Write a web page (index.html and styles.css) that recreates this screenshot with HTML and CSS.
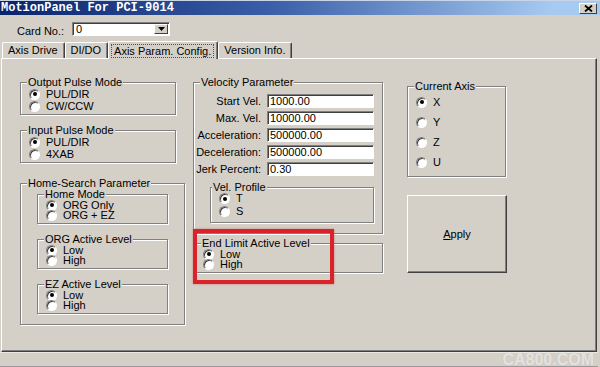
FILE: index.html
```html
<!DOCTYPE html>
<html lang="en">
<head>
    <meta charset="UTF-8">
    <title>MotionPanel For PCI-9014</title>
    <link rel="stylesheet" href="styles.css">
</head>
<body>
    <div id="window">
        <div class="titlebar">
            <span class="title">MotionPanel For PCI-9014</span>
            <span class="close">
                <svg width="9" height="7" viewBox="0 0 9 7"><path d="M1 0.5 L8 6.5 M8 0.5 L1 6.5" stroke="#000" stroke-width="1.8"/></svg>
            </span>
        </div>
        <div class="cardrow">
            <span class="cardlabel">Card No.:</span>
            <div class="combo">
                <span class="combo-value">0</span>
                <span class="drop">
                    <svg width="7" height="4" viewBox="0 0 7 4"><path d="M0 0 H7 L3.5 4 Z" fill="#000"/></svg>
                </span>
            </div>
        </div>
        <div class="tabs">
            <span class="tab">Axis Drive</span>
            <span class="tab">DI/DO</span>
            <span class="tab active"><span class="focus">Axis Param. Config.</span></span>
            <span class="tab">Version Info.</span>
        </div>
        <div class="panel">
            <div class="col col-left">
                <fieldset class="group g-output">
                    <legend>Output Pulse Mode</legend>
                    <div class="opt"><i class="radio on"></i>PUL/DIR</div>
                    <div class="opt"><i class="radio"></i>CW/CCW</div>
                </fieldset>
                <fieldset class="group g-input">
                    <legend>Input Pulse Mode</legend>
                    <div class="opt"><i class="radio on"></i>PUL/DIR</div>
                    <div class="opt"><i class="radio"></i>4XAB</div>
                </fieldset>
                <fieldset class="group g-home">
                    <legend>Home-Search Parameter</legend>
                    <fieldset class="group g-sub first">
                        <legend>Home Mode</legend>
                        <div class="opt small"><i class="radio on"></i>ORG Only</div>
                        <div class="opt small"><i class="radio"></i>ORG + EZ</div>
                    </fieldset>
                    <fieldset class="group g-sub">
                        <legend>ORG Active Level</legend>
                        <div class="opt small"><i class="radio on"></i>Low</div>
                        <div class="opt small"><i class="radio"></i>High</div>
                    </fieldset>
                    <fieldset class="group g-sub">
                        <legend>EZ Active Level</legend>
                        <div class="opt small"><i class="radio on"></i>Low</div>
                        <div class="opt small"><i class="radio"></i>High</div>
                    </fieldset>
                </fieldset>
            </div>
            <div class="col col-mid">
                <fieldset class="group g-vel">
                    <legend>Velocity Parameter</legend>
                    <div class="fields">
                        <span class="flabel">Start Vel.</span><span class="edit">1000.00</span>
                        <span class="flabel">Max. Vel.</span><span class="edit">10000.00</span>
                        <span class="flabel">Acceleration:</span><span class="edit">500000.00</span>
                        <span class="flabel">Deceleration:</span><span class="edit">500000.00</span>
                        <span class="flabel">Jerk Percent:</span><span class="edit">0.30</span>
                    </div>
                    <fieldset class="group g-profile">
                        <legend>Vel. Profile</legend>
                        <div class="opt mid"><i class="radio on"></i>T</div>
                        <div class="opt mid"><i class="radio"></i>S</div>
                    </fieldset>
                </fieldset>
                <fieldset class="group g-limit">
                    <legend>End Limit Active Level</legend>
                    <div class="opt small"><i class="radio on"></i>Low</div>
                    <div class="opt small"><i class="radio"></i>High</div>
                </fieldset>
            </div>
            <div class="col col-right">
                <fieldset class="group g-axis">
                    <legend>Current Axis</legend>
                    <div class="opt tall"><i class="radio on"></i>X</div>
                    <div class="opt tall"><i class="radio"></i>Y</div>
                    <div class="opt tall"><i class="radio"></i>Z</div>
                    <div class="opt tall"><i class="radio"></i>U</div>
                </fieldset>
                <div class="button"><span><u>A</u>pply</span></div>
            </div>
            <div class="mark"></div>
        </div>
        <div class="status"><span class="watermark">CA800.COM</span></div>
    </div>
</body>
</html>
```

FILE: styles.css
```css
*{
    margin: 0;
    padding: 0;
    box-sizing: border-box;
}
body{
    width: 600px;
    height: 367px;
    overflow: hidden;
    background: #d4d0c8;
    font-family: "Liberation Sans", Arial, sans-serif;
    font-size: 11px;
    color: #000;
}
#window{
    width: 600px;
    height: 367px;
    display: flex;
    flex-direction: column;
}

/* title bar */
.titlebar{
    height: 15px;
    display: flex;
    align-items: center;
    justify-content: space-between;
    background: linear-gradient(to right, #0a246a, #3a5ea8 45%, #a6caf0 92%);
    border-top: 1px solid #c8d4e8;
}
.title{
    font-family: "Liberation Mono", monospace;
    font-weight: bold;
    font-size: 12px;
    line-height: 14px;
    color: #fff;
    padding-left: 1px;
}
.close{
    width: 18px;
    height: 11px;
    margin-right: 3px;
    display: flex;
    align-items: center;
    justify-content: center;
    background: #d4d0c8;
    border: 1px solid;
    border-color: #fff #404040 #404040 #fff;
}

/* card selector */
.cardrow{
    height: 25px;
    display: flex;
    align-items: flex-start;
    padding: 7px 0 0 17px;
}
.cardlabel{
    line-height: 14px;
    padding-top: 2px;
    width: 55px;
}
.combo{
    width: 98px;
    height: 14px;
    display: flex;
    align-items: center;
    justify-content: space-between;
    background: #fff;
    border: 1px solid;
    border-color: #808080 #fff #fff #808080;
    box-shadow: inset 1px 1px 0 #404040;
    padding: 1px 1px 1px 3px;
}
.combo-value{
    line-height: 11px;
}
.drop{
    width: 14px;
    height: 10px;
    display: flex;
    align-items: center;
    justify-content: center;
    background: #d4d0c8;
    border: 1px solid;
    border-color: #fff #404040 #404040 #fff;
}

/* tabs */
.tabs{
    height: 18px;
    display: flex;
    align-items: flex-end;
    padding-left: 2px;
}
.tab{
    height: 16px;
    line-height: 14px;
    padding: 0 6px 0 5px;
    border-top: 1px solid #fff;
    border-left: 1px solid #fff;
    border-right: 1px solid #404040;
    box-shadow: inset -1px 0 0 #808080;
    border-radius: 2px 2px 0 0;
}
.tab.active{
    height: 18px;
    margin-bottom: -1px;
    padding: 2px 3px 0 2px;
    background: #d4d0c8;
    position: relative;
    z-index: 1;
}
.focus{
    display: block;
    line-height: 12px;
    padding: 0 2px;
    border: 1px dotted #505050;
}

/* tab page */
.panel{
    height: 294px;
    margin: 0 3px 0 1px;
    border: 1px solid;
    border-color: #fff #404040 #404040 #fff;
    box-shadow: inset -1px -1px 0 #808080;
    padding: 17px 0 0 18px;
    display: flex;
    align-items: flex-start;
    position: relative;
}
.col{
    display: flex;
    flex-direction: column;
    align-items: flex-start;
}
.col-mid{
    margin-left: 8px;
}
.col-right{
    margin-left: 24px;
}

/* group boxes */
.group{
    border: 1px solid #808080;
    box-shadow: 1px 1px 0 #fff, inset 1px 1px 0 #fff;
    padding: 0 0 2px 0;
    min-width: 0;
}
.group legend{
    line-height: 12px;
    padding: 0 1px;
    margin-left: 6px;
    background: #d4d0c8;
}
.g-output{
    width: 156px;
}
.g-input{
    width: 156px;
    margin-top: 9px;
}
.g-home{
    width: 165px;
    margin-top: 15px;
    padding-bottom: 10px;
}
.g-home > legend{
    line-height: 10px;
}
.g-sub{
    width: 131px;
    margin: 9px 0 0 16px;
    padding-bottom: 3px;
}
.g-sub.first{
    margin-top: 0;
}
.g-vel{
    width: 190px;
    padding-bottom: 10px;
}
.fields{
    display: grid;
    grid-template-columns: 67px 107px;
    column-gap: 6px;
    row-gap: 3px;
    margin-top: 6px;
    align-items: center;
}
.flabel{
    text-align: right;
    line-height: 12px;
    white-space: nowrap;
}
.edit{
    height: 14px;
    line-height: 12px;
    padding-left: 2px;
    background: #fff;
    border: 1px solid;
    border-color: #808080 #fff #fff #808080;
    box-shadow: inset 1px 1px 0 #404040;
}
.g-profile{
    width: 164px;
    margin: 5px 0 0 16px;
    padding-bottom: 4px;
}
.g-profile legend{
    margin-left: 1px;
}
.g-profile .opt:first-of-type{
    margin-top: -1px;
}
.g-limit{
    width: 188px;
    margin: 3px 0 0 2px;
    padding-bottom: 3px;
}
.g-limit legend{
    margin-left: 5px;
}
.g-limit .opt{
    margin-left: 7px;
}
.g-axis{
    width: 99px;
    margin-top: 4px;
    padding-bottom: 4px;
}

/* radio buttons */
.opt{
    display: flex;
    align-items: center;
    gap: 6px;
    height: 12px;
    line-height: 12px;
    margin-left: 8px;
    white-space: nowrap;
}
.opt.small{
    height: 10px;
    line-height: 10px;
}
.opt.mid{
    height: 13px;
    line-height: 13px;
}
.opt.tall{
    height: 20px;
    line-height: 14px;
}
.radio{
    width: 11px;
    height: 11px;
    flex: none;
    border-radius: 50%;
    background: #fff;
    border: 1px solid;
    border-color: #808080 #fff #fff #808080;
    box-shadow: inset 1px 1px 0 #404040;
    display: flex;
    align-items: center;
    justify-content: center;
}
.radio.on::after{
    content: "";
    width: 4px;
    height: 4px;
    border-radius: 50%;
    background: #000;
}

/* apply button */
.button{
    width: 100px;
    height: 78px;
    margin-top: 18px;
    display: flex;
    align-items: center;
    justify-content: center;
    border: 1px solid;
    border-color: #fff #404040 #404040 #fff;
    box-shadow: inset -1px -1px 0 #808080;
}
.button u{
    text-decoration-thickness: 1px;
}

/* red annotation frame */
.mark{
    position: absolute;
    left: 191px;
    top: 170px;
    width: 141px;
    height: 55px;
    border: 4px solid #d8232a;
    box-shadow: 0 0 2px rgba(216, 35, 42, 0.5);
}

/* bottom strip */
.status{
    height: 15px;
    display: flex;
    justify-content: flex-end;
    border-top: 1px solid #ece9e2;
    border-bottom: 1px solid #9a9a9a;
    margin-right: 2px;
    overflow: visible;
}
.watermark{
    font-weight: bold;
    font-size: 16px;
    line-height: 14px;
    color: rgba(255, 255, 255, 0.6);
    text-shadow: 0 0 1px rgba(0, 0, 0, 0.12);
    margin-right: 4px;
}
```
